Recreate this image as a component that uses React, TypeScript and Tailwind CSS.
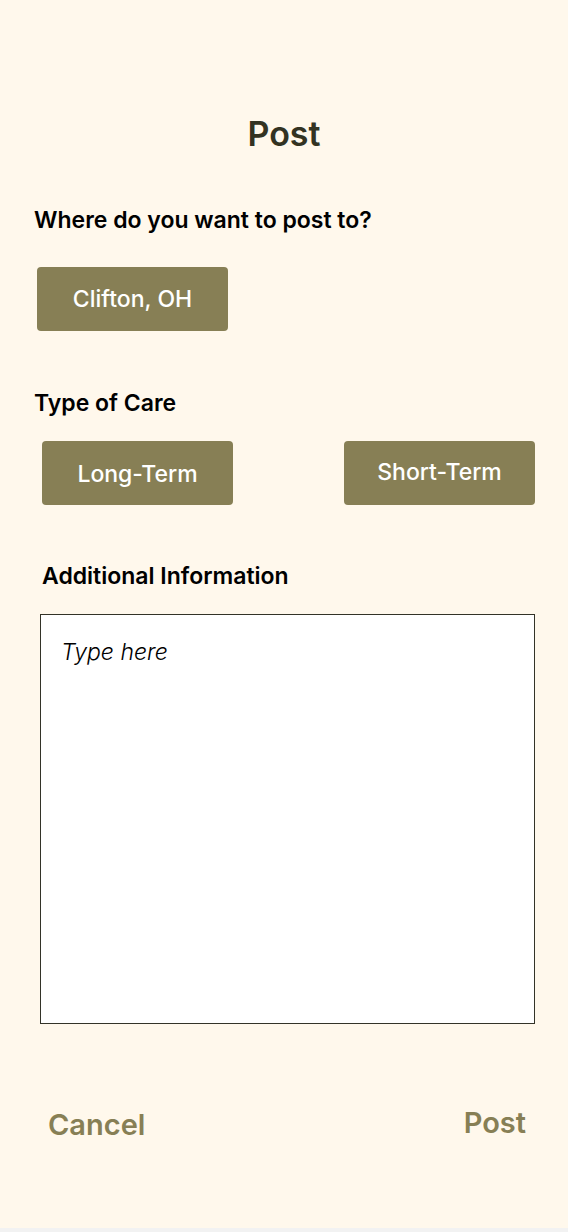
import React from "react";

const ChoiceButton: React.FC<{ label: string; className?: string }> = ({ label, className }) => (
  <button
    className={
      "h-[64px] w-[191px] rounded-[4px] bg-[#877f55] text-[23px] font-medium text-white " +
      (className ?? "")
    }
  >
    {label}
  </button>
);

export default function App() {
  return (
    <div className="bg-[#f2f2f2] pb-[4px]" style={{ fontFamily: "Inter, 'Noto Sans', sans-serif" }}>
      <div className="flex h-[1228px] flex-col bg-[#fff8ec] pt-[113px]">
        <h1 className="text-center text-[34px] font-semibold leading-[42px] text-[#333322]">Post</h1>

        <p className="mt-[51px] pl-[34px] text-[23px] font-semibold leading-[28px] text-black">
          Where do you want to post to?
        </p>
        <div className="mt-[33px] pl-[37px]">
          <ChoiceButton label="Clifton, OH" />
        </div>

        <p className="mt-[58px] pl-[34px] text-[23px] font-semibold leading-[28px] text-black">Type of Care</p>
        <div className="mt-[24px] flex justify-between pl-[42px] pr-[33px]">
          <ChoiceButton label="Long-Term" className="pt-[2px]" />
          <ChoiceButton label="Short-Term" className="pb-[2px]" />
        </div>

        <p className="mt-[57px] pl-[42px] text-[23px] font-semibold leading-[28px] text-black">
          Additional Information
        </p>
        <div className="mt-[24px] pl-[40px]">
          <textarea
            placeholder="Type here"
            className="block h-[410px] w-[495px] resize-none border border-[#333328] bg-white px-[20px] py-[23px] text-[23px] font-light italic leading-[28px] text-black placeholder:text-black outline-none"
          />
        </div>

        <div className="mt-[83px] flex items-start justify-between pl-[48px] pr-[42px]">
          <button className="text-[29px] font-semibold leading-[36px] text-[#877f55]">Cancel</button>
          <button className="-mt-[2px] text-[29px] font-semibold leading-[36px] text-[#877f55]">Post</button>
        </div>
      </div>
    </div>
  );
}
